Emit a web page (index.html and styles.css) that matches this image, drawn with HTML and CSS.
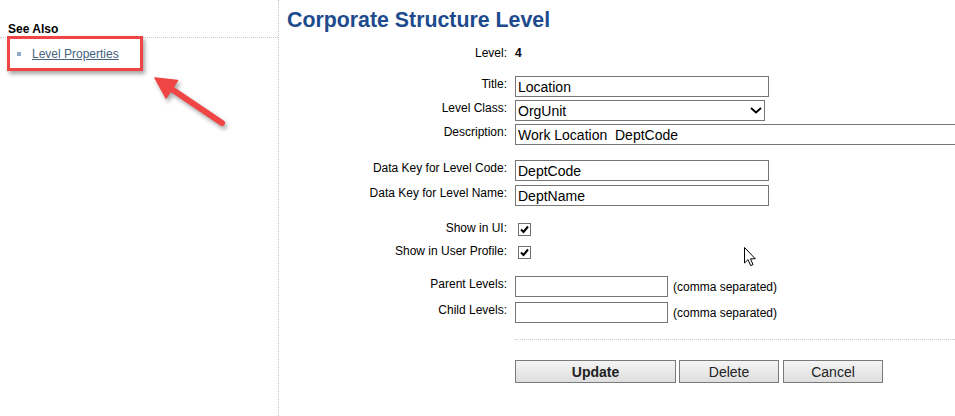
FILE: index.html
```html
<!DOCTYPE html>
<html lang="en">
<head>
<meta charset="utf-8">
<title>Corporate Structure Level</title>
<link rel="stylesheet" href="styles.css">
</head>
<body>
<div class="page">
  <aside class="sidebar">
    <h3 class="side-title">See Also</h3>
    <ul class="links">
      <li><a href="#">Level Properties</a></li>
    </ul>
    <div class="highlight"></div>
    <svg class="arrow" width="100" height="80" viewBox="0 0 100 80">
      <line x1="30" y1="28" x2="82" y2="63" stroke="#f04545" stroke-width="6" stroke-linecap="round"/>
      <polygon points="15,18 37.5,20.5 26,38" fill="#f04545" stroke="#f04545" stroke-width="1.5" stroke-linejoin="round"/>
    </svg>
  </aside>
  <main class="main">
    <h1 class="title">Corporate Structure Level</h1>
    <form class="form">
      <div class="row r-level"><span class="lbl">Level:</span><span class="val">4</span></div>
      <div class="row r-title"><span class="lbl">Title:</span><input class="inp w-254" type="text" value="Location"></div>
      <div class="row r-tight"><span class="lbl">Level Class:</span>
        <span class="select">
          <select class="sel"><option>OrgUnit</option></select>
          <svg class="chev" width="12" height="7" viewBox="0 0 12 7"><path d="M1 1 L6 5.5 L11 1" fill="none" stroke="#000" stroke-width="1.8"/></svg>
        </span>
      </div>
      <div class="row r-tight"><span class="lbl">Description:</span><input class="inp w-desc" type="text" value="Work Location  DeptCode"></div>
      <div class="row r-code"><span class="lbl">Data Key for Level Code:</span><input class="inp w-254" type="text" value="DeptCode"></div>
      <div class="row r-name"><span class="lbl">Data Key for Level Name:</span><input class="inp w-254" type="text" value="DeptName"></div>
      <div class="row r-check r-check1"><span class="lbl">Show in UI:</span>
        <span class="box"><svg width="11" height="11" viewBox="0 0 11 11"><path d="M2 5.5 L4.5 8 L9 2.5" fill="none" stroke="#000" stroke-width="2"/></svg></span>
      </div>
      <div class="row r-check r-check2"><span class="lbl">Show in User Profile:</span>
        <span class="box"><svg width="11" height="11" viewBox="0 0 11 11"><path d="M2 5.5 L4.5 8 L9 2.5" fill="none" stroke="#000" stroke-width="2"/></svg></span>
      </div>
      <div class="row r-parent"><span class="lbl">Parent Levels:</span><input class="inp w-153" type="text" value=""><span class="hint">(comma separated)</span></div>
      <div class="row r-child"><span class="lbl">Child Levels:</span><input class="inp w-153" type="text" value=""><span class="hint">(comma separated)</span></div>
      <div class="divider"></div>
      <div class="buttons">
        <button type="button" class="btn btn-update">Update</button>
        <button type="button" class="btn btn-delete">Delete</button>
        <button type="button" class="btn btn-cancel">Cancel</button>
      </div>
    </form>
    <svg class="cursor" width="13" height="20" viewBox="0 0 13 20">
      <path d="M0.5 0.5 L0.5 16 L4 12.6 L6.6 18.6 L9 17.6 L6.5 11.8 L11.3 11.8 Z" fill="#fff" stroke="#000" stroke-width="1" stroke-linejoin="miter"/>
    </svg>
  </main>
</div>
</body>
</html>
```

FILE: styles.css
```css
html, body {
  margin: 0;
  padding: 0;
  background: #fff;
}
body {
  font-family: "Liberation Sans", Arial, sans-serif;
  font-size: 12px;
  color: #000;
  overflow: hidden;
}
.page {
  display: flex;
  min-height: 416px;
}
.sidebar {
  width: 278px;
  flex-shrink: 0;
  border-right: 1px dotted #c4c4c4;
  position: relative;
}
.side-title {
  margin: 0;
  padding: 22px 0 1px 8px;
  font-size: 12px;
  line-height: 14px;
  font-weight: bold;
  border-bottom: 1px dotted #c8c8c8;
}
.links {
  list-style: none;
  margin: 0;
  padding: 9px 0 0 17px;
}
.links li {
  display: flex;
  align-items: center;
  line-height: 14px;
}
.links li::before {
  content: "";
  width: 4px;
  height: 4px;
  background: #8eaacb;
  margin-right: 11px;
}
.links a {
  color: #45627f;
  text-decoration: underline;
  font-size: 12px;
}
.highlight {
  position: absolute;
  left: 7px;
  top: 36px;
  width: 136px;
  height: 35px;
  box-sizing: border-box;
  border: 3px solid #f04545;
  box-shadow: 2px 3px 4px rgba(0, 0, 0, 0.35);
}
.arrow {
  position: absolute;
  left: 140px;
  top: 60px;
  filter: drop-shadow(2px 3px 2px rgba(0, 0, 0, 0.35));
}
.main {
  flex: 1;
  padding-left: 8px;
  position: relative;
  overflow: hidden;
}
.title {
  margin: 8px 0 0;
  font-size: 21.33px;
  line-height: 25px;
  font-weight: bold;
  color: #1e4b8d;
  white-space: nowrap;
}
.form {
  margin: 0;
}
.row {
  display: flex;
  align-items: flex-start;
}
.lbl {
  width: 220px;
  flex-shrink: 0;
  text-align: right;
  padding-top: 1px;
  line-height: 14px;
  margin-right: 8px;
  white-space: nowrap;
}
.val {
  font-weight: bold;
  padding-top: 1px;
  line-height: 14px;
}
.r-level { margin-top: 12px; }
.r-title { margin-top: 16px; }
.r-tight { margin-top: 3px; }
.r-code { margin-top: 15px; }
.r-name { margin-top: 4px; }
.r-check { height: 18px; }
.r-check .lbl { padding-top: 2px; }
.r-check1 { margin-top: 13px; }
.r-check2 { margin-top: 5px; }
.r-parent { margin-top: 16px; align-items: center; }
.r-child { margin-top: 5px; align-items: center; }
.r-parent .lbl, .r-child .lbl { align-self: flex-start; }
.inp {
  height: 21px;
  box-sizing: border-box;
  border: 1px solid #767676;
  border-radius: 0;
  padding: 0 2px;
  margin: 0;
  font-family: "Liberation Sans", Arial, sans-serif;
  font-size: 14px;
  color: #000;
  background: #fff;
  outline: none;
}
.w-254 { width: 254px; }
.w-153 { width: 153px; }
.w-desc { width: 470px; flex-shrink: 0; }
.select {
  position: relative;
  display: inline-block;
  width: 250px;
  height: 21px;
}
.sel {
  appearance: none;
  -webkit-appearance: none;
  width: 250px;
  height: 21px;
  box-sizing: border-box;
  border: 1px solid #767676;
  border-radius: 0;
  padding: 0 2px;
  margin: 0;
  font-family: "Liberation Sans", Arial, sans-serif;
  font-size: 14px;
  color: #000;
  background: #fff;
  outline: none;
}
.chev {
  position: absolute;
  left: 235px;
  top: 7px;
}
.box {
  width: 13px;
  height: 13px;
  box-sizing: border-box;
  border: 1px solid #6e6e6e;
  margin: 4px 0 0 3px;
  display: flex;
  align-items: center;
  justify-content: center;
  background: #fff;
}
.box svg { display: block; }
.hint {
  margin-left: 5px;
  line-height: 14px;
  white-space: nowrap;
}
.divider {
  margin: 16px 0 0 228px;
  border-top: 1px dotted #c8c8c8;
}
.buttons {
  display: flex;
  margin: 20px 0 0 228px;
}
.btn {
  height: 23px;
  box-sizing: border-box;
  border: 1px solid #7a7a7a;
  border-radius: 0;
  background: linear-gradient(#f4f4f4, #dedede);
  font-family: "Liberation Sans", Arial, sans-serif;
  font-size: 14px;
  color: #222;
  padding: 0;
  margin: 0;
}
.btn-update { width: 161px; font-weight: bold; }
.btn-delete { width: 100px; margin-left: 3px; }
.btn-cancel { width: 100px; margin-left: 4px; }
.cursor {
  position: absolute;
  left: 465px;
  top: 247px;
}
```
